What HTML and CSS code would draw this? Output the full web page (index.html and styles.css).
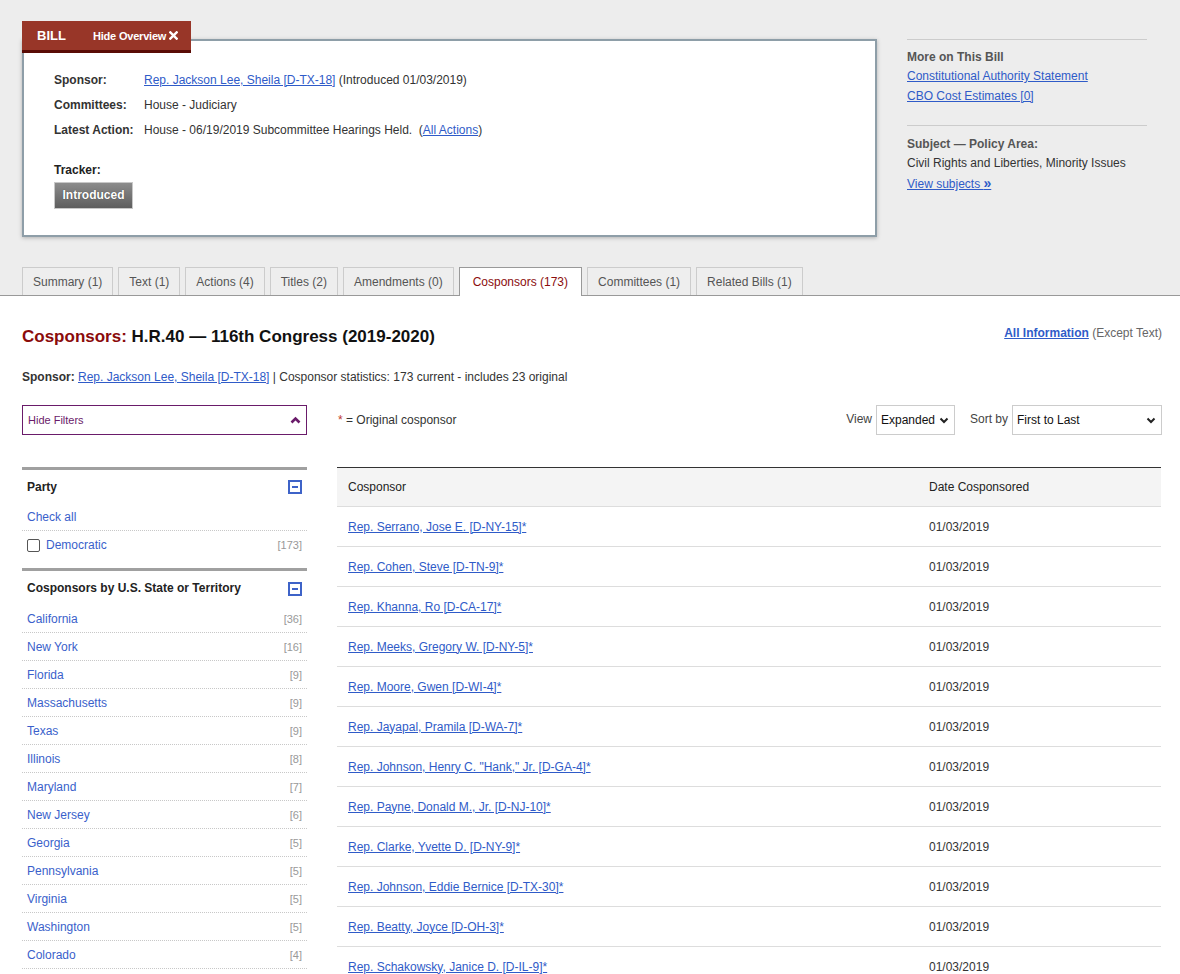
FILE: index.html
```html
<!DOCTYPE html>
<html lang="en">
<head>
<meta charset="utf-8">
<title>H.R.40 Cosponsors</title>
<link rel="stylesheet" href="styles.css">
</head>
<body>
<div class="hero">
  <div class="hero-top">
    <div class="overview">
      <div class="ov-tab">
        <span class="ov-bill">BILL</span>
        <span class="ov-hide">Hide Overview
          <svg class="ov-x" width="9" height="9" viewBox="0 0 10 10"><path d="M1.5 1.5 L8.5 8.5 M8.5 1.5 L1.5 8.5" stroke="#fff" stroke-width="2.6" stroke-linecap="square"/></svg>
        </span>
      </div>
      <div class="ov-box">
        <div class="ov-row"><span class="ov-label">Sponsor:</span><span class="ov-val"><a href="#">Rep. Jackson Lee, Sheila [D-TX-18]</a> (Introduced 01/03/2019)</span></div>
        <div class="ov-row"><span class="ov-label">Committees:</span><span class="ov-val">House - Judiciary</span></div>
        <div class="ov-row"><span class="ov-label">Latest Action:</span><span class="ov-val">House - 06/19/2019 Subcommittee Hearings Held. &nbsp;(<a href="#">All Actions</a>)</span></div>
        <div class="tracker-label">Tracker:</div>
        <div class="tracker-btn">Introduced</div>
      </div>
    </div>
    <div class="side">
      <div class="side-block">
        <div class="side-h">More on This Bill</div>
        <a class="side-link" href="#">Constitutional Authority Statement</a>
        <a class="side-link" href="#">CBO Cost Estimates [0]</a>
      </div>
      <div class="side-block second">
        <div class="side-h">Subject — Policy Area:</div>
        <div class="side-text">Civil Rights and Liberties, Minority Issues</div>
        <a class="side-link" href="#">View subjects <span class="raquo">»</span></a>
      </div>
    </div>
  </div>
  <div class="tabs">
    <div class="tab">Summary (1)</div>
    <div class="tab">Text (1)</div>
    <div class="tab">Actions (4)</div>
    <div class="tab">Titles (2)</div>
    <div class="tab">Amendments (0)</div>
    <div class="tab active">Cosponsors (173)</div>
    <div class="tab">Committees (1)</div>
    <div class="tab">Related Bills (1)</div>
  </div>
</div>

<div class="main">
  <div class="head-row">
    <h1 class="title"><span class="title-red">Cosponsors:</span> H.R.40 — 116th Congress (2019-2020)</h1>
    <div class="all-info"><a href="#">All Information</a> (Except Text)</div>
  </div>
  <div class="sponsor-line"><b>Sponsor:</b> <a href="#">Rep. Jackson Lee, Sheila [D-TX-18]</a> | Cosponsor statistics: 173 current - includes 23 original</div>

  <div class="grid">
    <div class="hide-filters">
      <span>Hide Filters</span>
      <svg width="11" height="8" viewBox="0 0 11 8"><path d="M1.5 6.5 L5.5 2.5 L9.5 6.5" fill="none" stroke="#6a1b6a" stroke-width="2.6"/></svg>
    </div>
    <div class="controls">
      <div class="legend"><span class="ast">*</span> = Original cosponsor</div>
      <div class="sorters">
        <span class="ctl-label">View</span>
        <div class="sel sel-view"><span>Expanded</span><svg width="10" height="7" viewBox="0 0 10 7"><path d="M1.5 1.5 L5 5 L8.5 1.5" fill="none" stroke="#222" stroke-width="2"/></svg></div>
        <span class="ctl-label sort-label">Sort by</span>
        <div class="sel sel-sort"><span>First to Last</span><svg width="10" height="7" viewBox="0 0 10 7"><path d="M1.5 1.5 L5 5 L8.5 1.5" fill="none" stroke="#222" stroke-width="2"/></svg></div>
      </div>
    </div>

    <div class="filters">
      <div class="facet">
        <div class="facet-h"><span>Party</span><span class="minus"></span></div>
        <div class="facet-item"><a href="#">Check all</a></div>
        <div class="facet-item noline"><label class="chk"><span class="box"></span><a href="#">Democratic</a></label><span class="count">[173]</span></div>
      </div>
      <div class="facet">
        <div class="facet-h"><span>Cosponsors by U.S. State or Territory</span><span class="minus"></span></div>
        <div class="facet-item"><a href="#">California</a><span class="count">[36]</span></div>
        <div class="facet-item"><a href="#">New York</a><span class="count">[16]</span></div>
        <div class="facet-item"><a href="#">Florida</a><span class="count">[9]</span></div>
        <div class="facet-item"><a href="#">Massachusetts</a><span class="count">[9]</span></div>
        <div class="facet-item"><a href="#">Texas</a><span class="count">[9]</span></div>
        <div class="facet-item"><a href="#">Illinois</a><span class="count">[8]</span></div>
        <div class="facet-item"><a href="#">Maryland</a><span class="count">[7]</span></div>
        <div class="facet-item"><a href="#">New Jersey</a><span class="count">[6]</span></div>
        <div class="facet-item"><a href="#">Georgia</a><span class="count">[5]</span></div>
        <div class="facet-item"><a href="#">Pennsylvania</a><span class="count">[5]</span></div>
        <div class="facet-item"><a href="#">Virginia</a><span class="count">[5]</span></div>
        <div class="facet-item"><a href="#">Washington</a><span class="count">[5]</span></div>
        <div class="facet-item"><a href="#">Colorado</a><span class="count">[4]</span></div>
        <div class="facet-item"><a href="#">Michigan</a><span class="count">[4]</span></div>
      </div>
    </div>

    <table class="cos-table">
      <thead>
        <tr><th class="c1">Cosponsor</th><th>Date Cosponsored</th></tr>
      </thead>
      <tbody>
        <tr><td class="c1"><a href="#">Rep. Serrano, Jose E. [D-NY-15]*</a></td><td>01/03/2019</td></tr>
        <tr><td class="c1"><a href="#">Rep. Cohen, Steve [D-TN-9]*</a></td><td>01/03/2019</td></tr>
        <tr><td class="c1"><a href="#">Rep. Khanna, Ro [D-CA-17]*</a></td><td>01/03/2019</td></tr>
        <tr><td class="c1"><a href="#">Rep. Meeks, Gregory W. [D-NY-5]*</a></td><td>01/03/2019</td></tr>
        <tr><td class="c1"><a href="#">Rep. Moore, Gwen [D-WI-4]*</a></td><td>01/03/2019</td></tr>
        <tr><td class="c1"><a href="#">Rep. Jayapal, Pramila [D-WA-7]*</a></td><td>01/03/2019</td></tr>
        <tr><td class="c1"><a href="#">Rep. Johnson, Henry C. "Hank," Jr. [D-GA-4]*</a></td><td>01/03/2019</td></tr>
        <tr><td class="c1"><a href="#">Rep. Payne, Donald M., Jr. [D-NJ-10]*</a></td><td>01/03/2019</td></tr>
        <tr><td class="c1"><a href="#">Rep. Clarke, Yvette D. [D-NY-9]*</a></td><td>01/03/2019</td></tr>
        <tr><td class="c1"><a href="#">Rep. Johnson, Eddie Bernice [D-TX-30]*</a></td><td>01/03/2019</td></tr>
        <tr><td class="c1"><a href="#">Rep. Beatty, Joyce [D-OH-3]*</a></td><td>01/03/2019</td></tr>
        <tr><td class="c1"><a href="#">Rep. Schakowsky, Janice D. [D-IL-9]*</a></td><td>01/03/2019</td></tr>
        <tr><td class="c1"><a href="#">Rep. Lee, Barbara [D-CA-13]*</a></td><td>01/03/2019</td></tr>
      </tbody>
    </table>
  </div>
</div>
</body>
</html>
```

FILE: styles.css
```css
* { box-sizing: border-box; }
html, body { margin: 0; padding: 0; }
body {
  font-family: "Liberation Sans", Arial, sans-serif;
  font-size: 12px;
  color: #333;
  background: #fff;
}
a { color: #2f5bc8; text-decoration: underline; }

/* ---------- hero ---------- */
.hero {
  background: #ededed;
  padding-top: 21px;
  border-bottom: 1px solid #999;
}
.hero-top { display: flex; padding-left: 22px; }
.overview { position: relative; width: 855px; padding-top: 18px; }
.ov-tab {
  position: absolute;
  top: 0; left: 0;
  width: 169px; height: 32px;
  background: #983628;
  border-bottom: 3px solid #5a0c06;
  color: #fff;
  font-weight: bold;
  display: flex;
  align-items: center;
  z-index: 2;
}
.ov-bill { font-size: 13px; padding-left: 15px; width: 71px; }
.ov-hide { font-size: 11px; display: flex; align-items: center; gap: 3px; letter-spacing: -0.2px; }
.ov-x { margin-top: -1px; }
.ov-box {
  height: 198px;
  background: #fff;
  border: 2px solid #8e9ea8;
  box-shadow: 0 1px 4px rgba(0,0,0,0.25);
  padding: 27px 0 0 30px;
}
.ov-row { display: flex; line-height: 25px; }
.ov-label { width: 90px; font-weight: bold; color: #333; }
.ov-val { color: #333; }
.tracker-label { font-weight: bold; color: #222; margin-top: 19px; line-height: 16px; }
.tracker-btn {
  margin-top: 4px;
  width: 79px; height: 27px;
  border: 1px solid #c8c8c8;
  background: linear-gradient(#8c8c8c, #5e5e5e);
  color: #fff;
  font-weight: bold;
  font-size: 12px;
  display: flex; align-items: center; justify-content: center;
  padding-bottom: 2px;
  text-shadow: 0 0 1px rgba(0,0,0,0.5);
}

.side { width: 240px; margin-left: 30px; margin-top: 18px; }
.side-block { border-top: 1px solid #ccc; padding-top: 8px; }
.side-block.second { margin-top: 19px; padding-top: 9px; }
.side-h { font-weight: bold; color: #555; line-height: 18px; }
.side-link { display: block; line-height: 20px; }
.side-text { line-height: 21px; color: #333; }
.raquo { font-weight: bold; font-size: 14px; line-height: 10px; }

.tabs {
  display: flex;
  gap: 5px;
  padding-left: 22px;
  margin-top: 30px;
  align-items: flex-end;
}
.tab {
  height: 28px;
  padding: 0 10px;
  border: 1px solid #ccc;
  border-bottom: none;
  background: #eee;
  color: #555;
  display: flex; align-items: center;
  font-size: 12px;
}
.tab.active {
  background: #fff;
  border-color: #999;
  color: #8b0d0d;
  margin-bottom: -1px;
  height: 29px;
  padding: 0 13px 1px;
}

/* ---------- main ---------- */
.main { padding: 0 18px 0 22px; }
.head-row {
  display: flex;
  justify-content: space-between;
  align-items: flex-start;
  margin-top: 31px;
}
.title {
  margin: 0;
  font-size: 17px;
  line-height: 20px;
  color: #111;
  font-weight: bold;
}
.title-red { color: #8b0b0b; }
.all-info { line-height: 12px; color: #666; }
.all-info a { font-weight: bold; }
.sponsor-line { margin-top: 22px; line-height: 16px; color: #333; }
.sponsor-line b { color: #333; }

.grid {
  display: grid;
  grid-template-columns: 285px 824px;
  column-gap: 30px;
  row-gap: 32px;
  margin-top: 20px;
  align-items: start;
}
.hide-filters {
  height: 30px;
  border: 1px solid #6a1b6a;
  color: #6a1b6a;
  font-size: 11px;
  display: flex;
  align-items: center;
  justify-content: space-between;
  padding: 0 5px 0 5px;
}
.controls {
  display: flex;
  align-items: center;
  justify-content: space-between;
  height: 30px;
}
.legend { padding-left: 1px; color: #333; }
.ast { color: #c0392b; }
.sorters { display: flex; align-items: center; margin-right: -1px; }
.ctl-label { color: #444; margin-right: 4px; margin-top: -3px; }
.sort-label { margin-left: 15px; }
.sel {
  height: 30px;
  border: 1px solid #ccc;
  background: #fff;
  display: flex;
  align-items: center;
  justify-content: space-between;
  padding: 0 5px 0 4px;
  color: #111;
  font-size: 12px;
}
.sel-view { width: 79px; }
.sel-sort { width: 150px; }

/* filters */
.facet { border-top: 3px solid #a0a0a0; margin-bottom: 9px; }
.facet + .facet { margin-bottom: 0; }
.facet-h {
  height: 33px;
  display: flex;
  align-items: center;
  justify-content: space-between;
  padding: 0 5px;
  font-weight: bold;
  color: #222;
}
.facet + .facet .facet-h { height: 34px; }
.minus {
  width: 14px; height: 14px;
  border: 2px solid #3e63c8;
  position: relative;
  display: block;
  margin-top: 1px;
}
.minus::after {
  content: "";
  position: absolute;
  left: 2px; top: 4px;
  width: 6px; height: 2px;
  background: #3e63c8;
}
.facet-item {
  height: 28px;
  border-bottom: 1px dotted #c8c8c8;
  display: flex;
  align-items: center;
  justify-content: space-between;
  padding: 0 5px;
}
.facet-item a { text-decoration: none; color: #3a5fcb; }
.facet-item.noline { border-bottom: none; }
.count { color: #999; font-size: 11px; }
.chk { display: flex; align-items: center; gap: 6px; }
.box {
  width: 13px; height: 13px;
  border: 1px solid #555;
  border-radius: 2px;
  background: #fff;
  display: block;
}

/* table */
.cos-table {
  width: 824px;
  border-collapse: collapse;
  border-top: 1px solid #333;
}
.cos-table th {
  background: #f4f4f4;
  height: 39px;
  text-align: left;
  font-weight: normal;
  color: #222;
  padding: 0 11px 1px;
  border-bottom: 1px solid #ddd;
}
.cos-table td {
  height: 40px;
  padding: 0 11px;
  border-bottom: 1px solid #ddd;
  color: #333;
}
.cos-table .c1 { width: 581px; }
```
